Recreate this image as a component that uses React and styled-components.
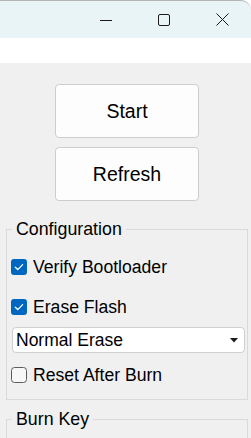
import React, { useState } from "react";
import styled, { createGlobalStyle } from "styled-components";

const GlobalStyle = createGlobalStyle`
  html, body {
    margin: 0;
    padding: 0;
    background: #ffffff;
  }
  body {
    font-family: "Liberation Sans", Arial, sans-serif;
    color: #000;
  }
`;

const Window = styled.div`
  width: 251px;
  height: 438px;
  overflow: hidden;
  display: flex;
  flex-direction: column;
  background: #ffffff;
`;

const TitleBar = styled.div`
  flex-shrink: 0;
  height: 37px;
  background: #e9f4f7;
  border-top: 1px solid #b4b4b4;
  border-top-right-radius: 10px;
  display: flex;
  justify-content: flex-end;
`;

const CaptionButton = styled.div`
  width: 58px;
  height: 37px;
  display: flex;
  align-items: center;
  justify-content: center;
`;

const MenuBand = styled.div`
  flex-shrink: 0;
  height: 25px;
  background: #ffffff;
`;

const Body = styled.main`
  flex: 1 0 auto;
  background: #f0f0f0;
  padding-top: 21px;
  display: flex;
  flex-direction: column;
`;

const ActionButton = styled.button`
  flex-shrink: 0;
  width: 144px;
  height: 54px;
  margin: 0 0 9px 55px;
  background: #fdfdfd;
  border: 1px solid #cdcdcd;
  border-radius: 4px;
  font-family: "Liberation Sans", Arial, sans-serif;
  font-size: 19.5px;
  color: #000;
  display: flex;
  align-items: center;
  justify-content: center;
  padding: 0;
`;

const GroupBox = styled.fieldset`
  flex-shrink: 0;
  margin: ${(p) => p.top}px 3px 0 6px;
  border: 1px solid #dadada;
  padding: 18px 4px 14px 4px;
  min-width: 0;
  display: flex;
  flex-direction: column;
  ${(p) => p.grow && "flex: 1 0 60px;"}
`;

const Legend = styled.legend`
  margin-left: 1px;
  padding: 0 4px;
  font-size: 17.8px;
  line-height: 20px;
`;

const Row = styled.label`
  display: flex;
  align-items: center;
  gap: 6px;
  height: 20px;
  font-size: 17.6px;
  line-height: 20px;
  margin-bottom: ${(p) => p.gap || 0}px;
`;

const Select = styled.div`
  width: 222px;
  height: 24px;
  margin-left: 1px;
  margin-bottom: 12px;
  background: #ffffff;
  border: 1px solid #cfcfcf;
  border-radius: 4px;
  display: flex;
  align-items: center;
  justify-content: space-between;
  padding: 0 6px 0 3px;
  font-size: 17.5px;
`;

function CheckBox({ checked }) {
  return (
    <svg width="16" height="16" viewBox="0 0 16 16">
      {checked ? (
        <>
          <rect x="0" y="0" width="16" height="16" rx="3" fill="#0067c0" />
          <path
            d="M4.3 8.3 L6.8 10.6 L11.6 5.6"
            fill="none"
            stroke="#fff"
            strokeWidth="1.3"
            strokeLinecap="round"
            strokeLinejoin="round"
          />
        </>
      ) : (
        <rect x="0.5" y="0.5" width="15" height="15" rx="3" fill="#f7f7f7" stroke="#5c5c5c" />
      )}
    </svg>
  );
}

function App() {
  const [verify] = useState(true);
  const [erase] = useState(true);
  const [reset] = useState(false);

  return (
    <Window>
      <GlobalStyle />
      <TitleBar>
        <CaptionButton>
          <svg width="12" height="12" viewBox="0 0 12 12">
            <path d="M0 6.5 H12" stroke="#1b1b1b" strokeWidth="1" />
          </svg>
        </CaptionButton>
        <CaptionButton>
          <svg width="12" height="12" viewBox="0 0 12 12">
            <rect x="0.5" y="0.5" width="11" height="11" rx="1.5" fill="none" stroke="#1b1b1b" />
          </svg>
        </CaptionButton>
        <CaptionButton>
          <svg width="13" height="13" viewBox="0 0 13 13">
            <path d="M0.5 0.5 L12.5 12.5 M12.5 0.5 L0.5 12.5" stroke="#1b1b1b" strokeWidth="1" />
          </svg>
        </CaptionButton>
      </TitleBar>
      <MenuBand />
      <Body>
        <ActionButton>Start</ActionButton>
        <ActionButton>Refresh</ActionButton>
        <GroupBox top={9}>
          <Legend>Configuration</Legend>
          <Row gap={20}>
            <CheckBox checked={verify} />
            Verify Bootloader
          </Row>
          <Row gap={10}>
            <CheckBox checked={erase} />
            Erase Flash
          </Row>
          <Select>
            <span>Normal Erase</span>
            <svg width="8" height="5" viewBox="0 0 8 5">
              <path d="M0 0 H8 L4 4.5 Z" fill="#1b1b1b" />
            </svg>
          </Select>
          <Row>
            <CheckBox checked={reset} />
            Reset After Burn
          </Row>
        </GroupBox>
        <GroupBox top={9} grow>
          <Legend>Burn Key</Legend>
        </GroupBox>
      </Body>
    </Window>
  );
}

export default App;
